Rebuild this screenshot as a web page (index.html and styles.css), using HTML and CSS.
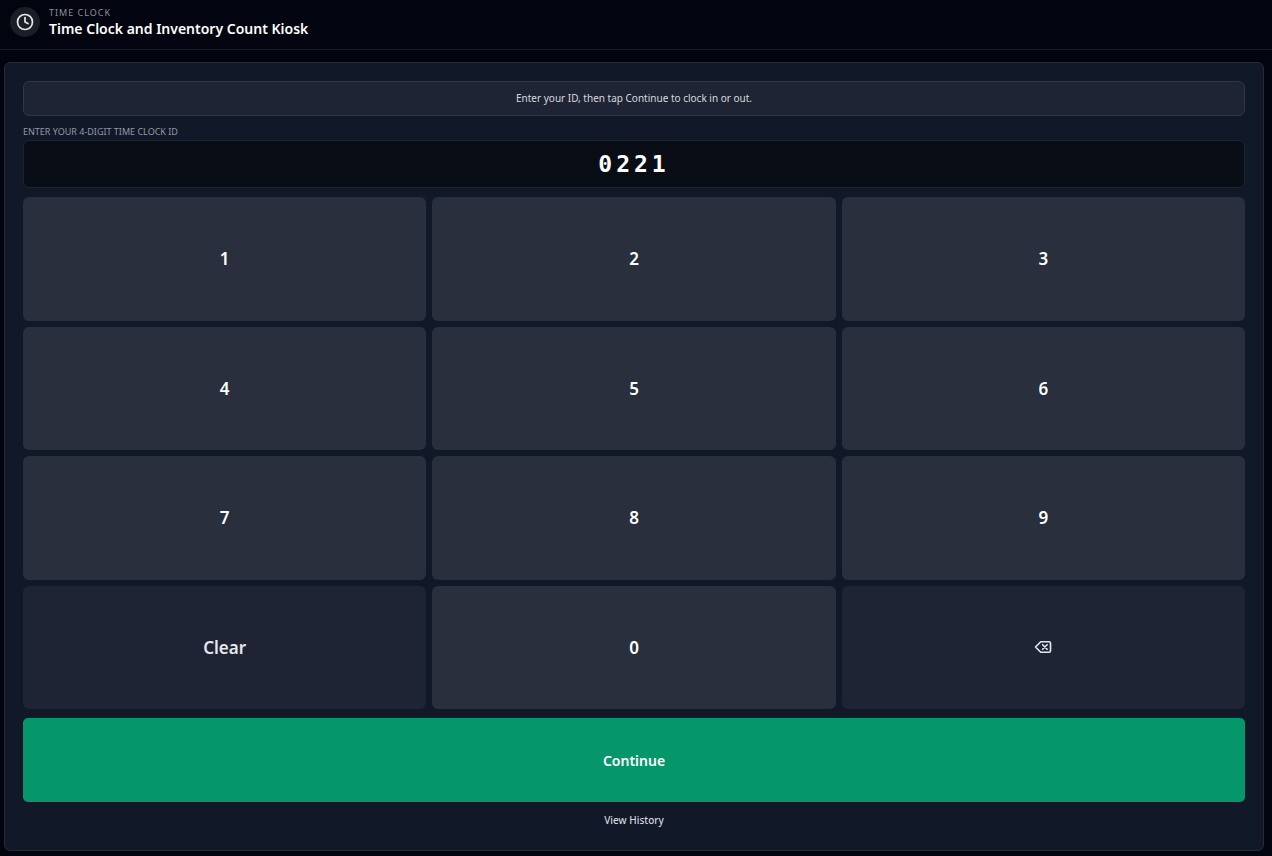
FILE: index.html
```html
<!DOCTYPE html>
<html lang="en">
<head>
<meta charset="utf-8">
<meta name="viewport" content="width=device-width, initial-scale=1">
<title>Time Clock and Inventory Count Kiosk</title>
<link rel="stylesheet" href="styles.css">
</head>
<body>
<header class="topbar">
  <span class="badge">
    <svg width="18" height="18" viewBox="0 0 24 24" fill="none" stroke="currentColor" stroke-width="2.300" stroke-linecap="round" stroke-linejoin="round" aria-hidden="true"><circle cx="12" cy="12" r="10"/><path d="M12 6v6l4 2"/></svg>
  </span>
  <div class="titles">
    <p class="eyebrow">TIME CLOCK</p>
    <h1 class="title">Time Clock and Inventory Count Kiosk</h1>
  </div>
</header>
<main class="main">
  <form class="panel">
    <p class="notice">Enter your ID, then tap Continue to clock in or out.</p>
    <label class="label" for="clock-id">ENTER YOUR 4-DIGIT TIME CLOCK ID</label>
    <input class="display" id="clock-id" type="text" inputmode="numeric" maxlength="4" value="0221">
    <div class="keypad">
      <button class="key" type="button">1</button>
      <button class="key" type="button">2</button>
      <button class="key" type="button">3</button>
      <button class="key" type="button">4</button>
      <button class="key" type="button">5</button>
      <button class="key" type="button">6</button>
      <button class="key" type="button">7</button>
      <button class="key" type="button">8</button>
      <button class="key" type="button">9</button>
      <button class="key key-muted" type="button">Clear</button>
      <button class="key" type="button">0</button>
      <button class="key key-muted" type="button" aria-label="Delete last digit">
        <svg width="18" height="18" viewBox="0 0 24 24" fill="none" stroke="currentColor" stroke-width="2.200" stroke-linecap="round" stroke-linejoin="round" aria-hidden="true"><path d="M9 5h11a2 2 0 0 1 2 2v10a2 2 0 0 1-2 2H9l-7-7z"/><path d="m11.500 9 6 6M17.500 9l-6 6"/></svg>
      </button>
    </div>
    <button class="continue" type="submit">Continue</button>
    <button class="history" type="button">View History</button>
  </form>
</main>
</body>
</html>
```
FILE: styles.css
```css
* {
  box-sizing: border-box;
}

body {
  display: flex;
  flex-direction: column;
  min-height: 100vh;
  margin: 0;
  background: #02040f;
  color: #ffffff;
  font-family: "Noto Sans", "Open Sans", sans-serif;
}

button,
input {
  margin: 0;
  font-family: inherit;
}

.topbar {
  display: flex;
  align-items: center;
  gap: 9px;
  padding: 6px 10px 11px;
  border-bottom: 1px solid #1b1e29;
}

.badge {
  display: flex;
  align-items: center;
  justify-content: center;
  width: 30px;
  height: 30px;
  border-radius: 50%;
  background: #1b1d27;
  color: #e5e7eb;
}

.eyebrow,
.title,
.notice {
  margin: 0;
}

.eyebrow {
  color: #8b919d;
  font-size: 9px;
  line-height: 13px;
  letter-spacing: 1px;
}

.title {
  font-size: 14px;
  font-weight: 600;
  line-height: 19px;
}

.main {
  display: flex;
  flex: 1;
  padding: 12px 8px 5px 4px;
}

.panel {
  display: flex;
  flex: 1;
  flex-direction: column;
  padding: 18px;
  border: 1px solid #262b38;
  border-radius: 6px;
  background: #111827;
}

.notice {
  padding: 8px;
  border: 1px solid #303644;
  border-radius: 6px;
  background: #1e2433;
  color: #d6d9df;
  font-size: 10px;
  line-height: 17px;
  text-align: center;
}

.label {
  margin-top: 8px;
  padding-bottom: 1px;
  color: #949aa6;
  font-size: 9px;
  line-height: 15px;
}

.display {
  width: 100%;
  height: 48px;
  padding: 0;
  border: 1px solid #1e242d;
  border-radius: 6px;
  background: #090d15;
  color: #ffffff;
  font-family: "DejaVu Sans Mono", monospace;
  font-size: 23px;
  font-weight: 700;
  letter-spacing: 4px;
  text-align: center;
}

.keypad {
  display: grid;
  flex: 1;
  grid-template-columns: repeat(3, 1fr);
  grid-auto-rows: 1fr;
  gap: 6px;
  margin: 9px 0;
}

.key {
  display: flex;
  align-items: center;
  justify-content: center;
  border: 0;
  border-radius: 6px;
  background: #292f3c;
  color: #ffffff;
  font-size: 17px;
  font-weight: 600;
}

.key-muted {
  background: #1e2433;
  color: #e5e7eb;
}

.continue {
  height: 84px;
  border: 0;
  border-radius: 5px;
  background: #059669;
  color: #ffffff;
  font-size: 14px;
  font-weight: 600;
}

.history {
  align-self: center;
  margin: 9px 0 3px;
  padding: 0;
  border: 0;
  background: none;
  color: #d1d5db;
  font-size: 10px;
  font-weight: 500;
  line-height: 18px;
}
```
